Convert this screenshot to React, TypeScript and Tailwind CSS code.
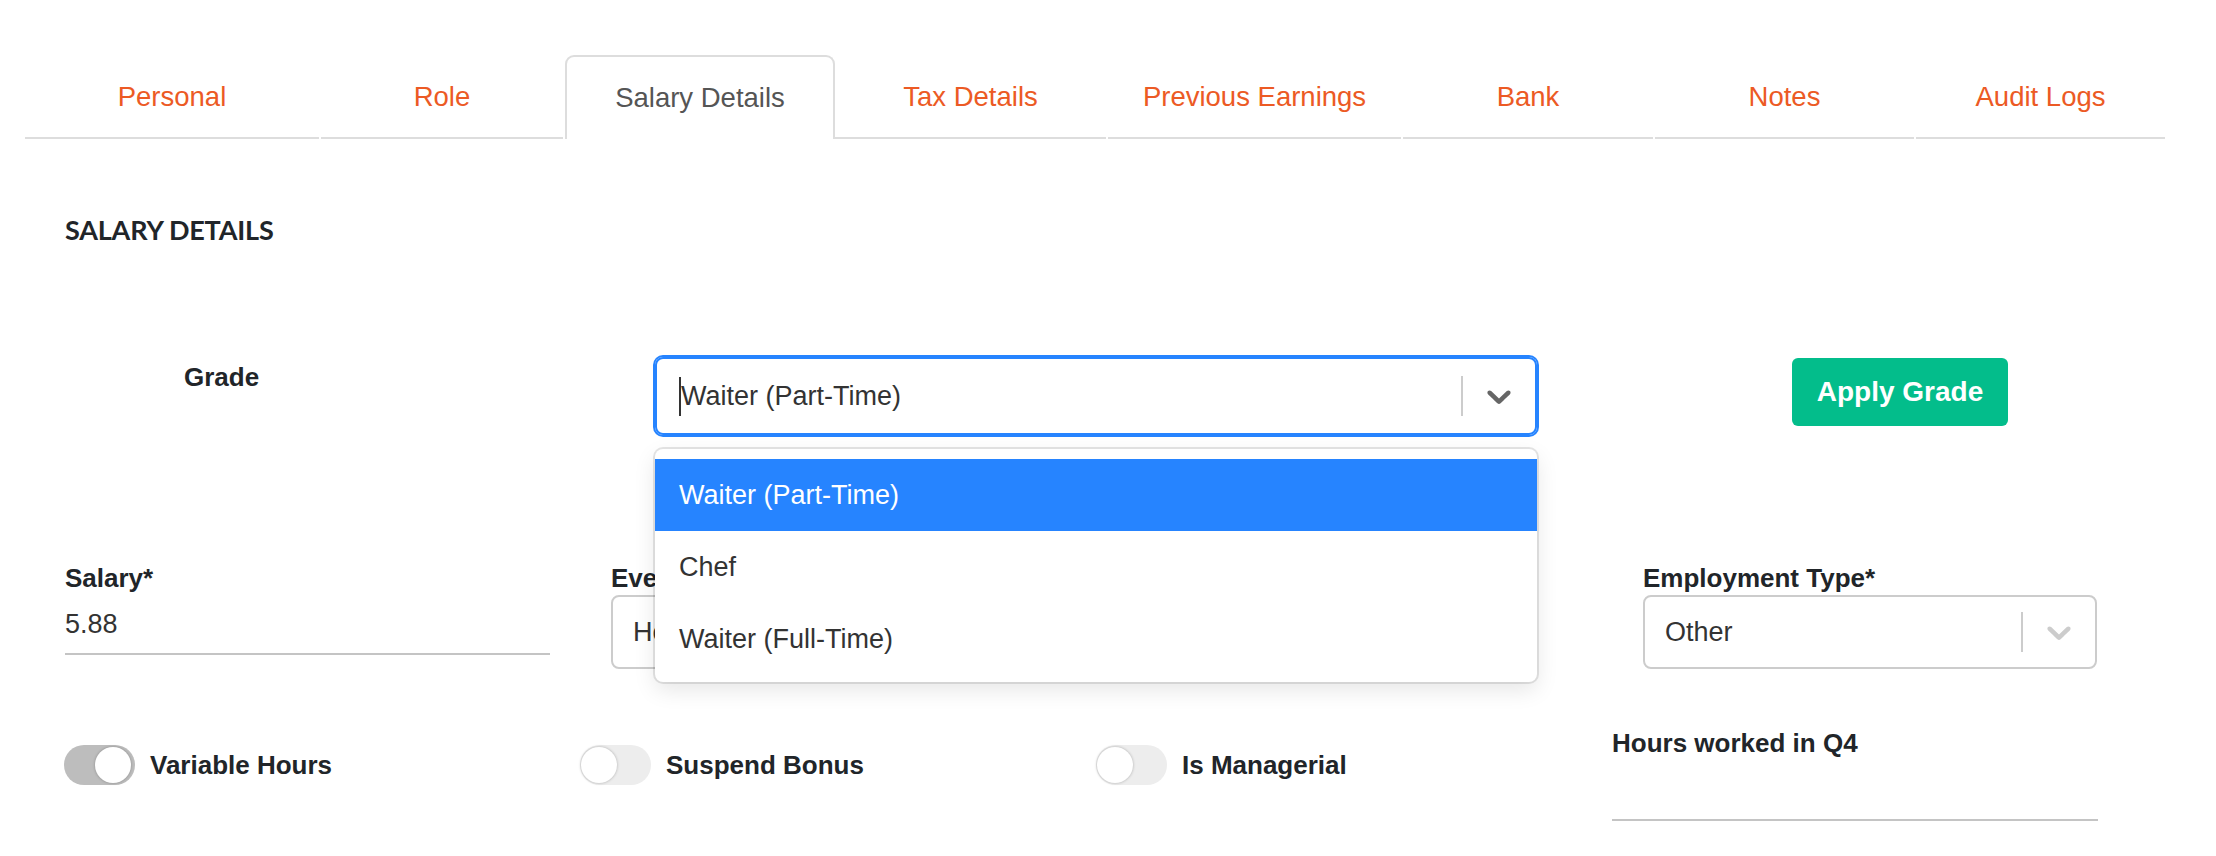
import React from 'react';

const tabs = [
  { label: 'Personal', w: 'w-[294px]' },
  { label: 'Role', w: 'w-[242px]' },
  { label: 'Salary Details', w: 'w-[270px]', active: true },
  { label: 'Tax Details', w: 'w-[271px]' },
  { label: 'Previous Earnings', w: 'w-[293px]' },
  { label: 'Bank', w: 'w-[250px]' },
  { label: 'Notes', w: 'w-[259px]' },
  { label: 'Audit Logs', w: 'w-[249px]' },
];

function Chevron({ color }: { color: string }) {
  return (
    <svg width="40" height="40" viewBox="0 0 20 20" fill={color}>
      <path d="M4.516 7.548c0.436-0.446 1.043-0.481 1.576 0l3.908 3.747 3.908-3.747c0.533-0.481 1.141-0.446 1.574 0 0.436 0.445 0.408 1.197 0 1.615-0.406 0.418-4.695 4.502-4.695 4.502-0.217 0.223-0.502 0.335-0.787 0.335s-0.57-0.112-0.789-0.335c0 0-4.287-4.084-4.695-4.502s-0.436-1.17 0-1.615z" />
    </svg>
  );
}

function Toggle({ on, label }: { on?: boolean; label: string }) {
  return (
    <div className="flex items-center gap-[15px] pt-[17px]">
      <div className={`relative w-[71px] h-[40px] rounded-full ${on ? 'bg-[#bdbdbd]' : 'bg-[#ededed]'}`}>
        <div
          className={`absolute top-[2px] w-[36px] h-[36px] rounded-full bg-white shadow-[0_0_3px_rgba(0,0,0,0.28)] ${on ? 'right-[4px]' : 'left-[1px]'}`}
        />
      </div>
      <span className="text-[26px] font-bold text-[#212529] pt-[2px]">{label}</span>
    </div>
  );
}

export default function App() {
  return (
    <div className="w-[2216px] h-[856px] bg-white text-[#212529] font-['Liberation_Sans',Arial,sans-serif] overflow-hidden">
      {/* Tabs */}
      <div className="flex pt-[55px] pl-[25px]">
        {tabs.map((t) =>
          t.active ? (
            <div
              key={t.label}
              className={`${t.w} h-[84px] mr-0 border-2 border-b-0 border-[#dddddd] rounded-t-[9px] flex items-center justify-center text-[27.5px] text-[#555555]`}
            >
              {t.label}
            </div>
          ) : (
            <div
              key={t.label}
              className={`${t.w} h-[84px] mr-[2px] border-b-2 border-[#dddddd] flex items-center justify-center pt-[2px] text-[27.5px] text-[#ec5a24]`}
            >
              {t.label}
            </div>
          )
        )}
      </div>

      {/* Section heading */}
      <h2 className="mt-[75px] pl-[65px] h-[32px] leading-[32px] text-[27px] font-bold font-['Lato',sans-serif] tracking-[-0.2px]">
        SALARY DETAILS
      </h2>

      {/* Grade row */}
      <div className="relative flex items-start mt-[111px]">
        <div className="w-[655px] pl-[184px] pt-[5px] text-[26px] font-bold leading-[30px]">Grade</div>
        <div className="relative w-[882px] h-[78px] rounded-[8px] border-2 border-[#2684ff] shadow-[0_0_0_2px_#2684ff] flex items-center">
          <div className="flex-1 flex items-center pl-[22px]">
            <span className="w-[2px] h-[39px] bg-[#333333]" />
            <span className="text-[27px] text-[#333333]">Waiter (Part-Time)</span>
          </div>
          <span className="w-[2px] h-[40px] bg-[#cccccc]" />
          <div className="px-[16px] flex items-center">
            <Chevron color="#666666" />
          </div>

          {/* Menu */}
          <div className="absolute left-[-2px] top-[90px] w-[882px] rounded-[8px] bg-white pt-[10px] pb-[7px] z-10 shadow-[0_0_0_2px_rgba(0,0,0,0.1),0_8px_22px_rgba(0,0,0,0.1)]">
            <div className="h-[72px] flex items-center pl-[24px] bg-[#2684ff] text-white text-[27px]">Waiter (Part-Time)</div>
            <div className="h-[72px] flex items-center pl-[24px] text-[#333333] text-[27px]">Chef</div>
            <div className="h-[72px] flex items-center pl-[24px] text-[#333333] text-[27px]">Waiter (Full-Time)</div>
          </div>
        </div>
        <button className="ml-[255px] mt-[1px] w-[216px] h-[68px] rounded-[6px] bg-[#03bd8b] text-white text-[28px] font-bold">
          Apply Grade
        </button>
      </div>

      {/* Salary row */}
      <div className="flex items-start mt-[128px]">
        <div className="ml-[65px] w-[485px]">
          <div className="h-[30px] leading-[30px] text-[26px] font-bold">Salary*</div>
          <div className="h-[62px] flex items-center pt-[2px] border-b-2 border-[#c4c4c4] text-[27px] text-[#333333]">5.88</div>
        </div>
        <div className="ml-[61px] w-[455px]">
          <div className="h-[30px] leading-[30px] text-[26px] font-bold">Every</div>
          <div className="mt-[2px] h-[74px] rounded-[8px] border-2 border-[#cccccc] flex items-center">
            <span className="flex-1 pl-[20px] text-[27px] text-[#333333]">Hour</span>
            <span className="w-[2px] h-[40px] bg-[#cccccc]" />
            <div className="px-[16px]">
              <Chevron color="#cccccc" />
            </div>
          </div>
        </div>
        <div className="ml-[577px] w-[454px]">
          <div className="h-[30px] leading-[30px] text-[26px] font-bold">Employment Type*</div>
          <div className="mt-[2px] h-[74px] rounded-[8px] border-2 border-[#cccccc] flex items-center">
            <span className="flex-1 pl-[20px] text-[27px] text-[#333333]">Other</span>
            <span className="w-[2px] h-[40px] bg-[#cccccc]" />
            <div className="px-[16px]">
              <Chevron color="#cccccc" />
            </div>
          </div>
        </div>
      </div>

      {/* Toggles row */}
      <div className="flex items-start mt-[58px] pl-[64px]">
        <div className="w-[516px]">
          <Toggle on label="Variable Hours" />
        </div>
        <div className="w-[516px]">
          <Toggle label="Suspend Bonus" />
        </div>
        <div className="w-[516px]">
          <Toggle label="Is Managerial" />
        </div>
        <div className="w-[486px]">
          <div className="h-[30px] leading-[30px] mt-[1px] text-[26px] font-bold">Hours worked in Q4</div>
          <div className="h-[63px] border-b-2 border-[#c4c4c4]" />
        </div>
      </div>
    </div>
  );
}
